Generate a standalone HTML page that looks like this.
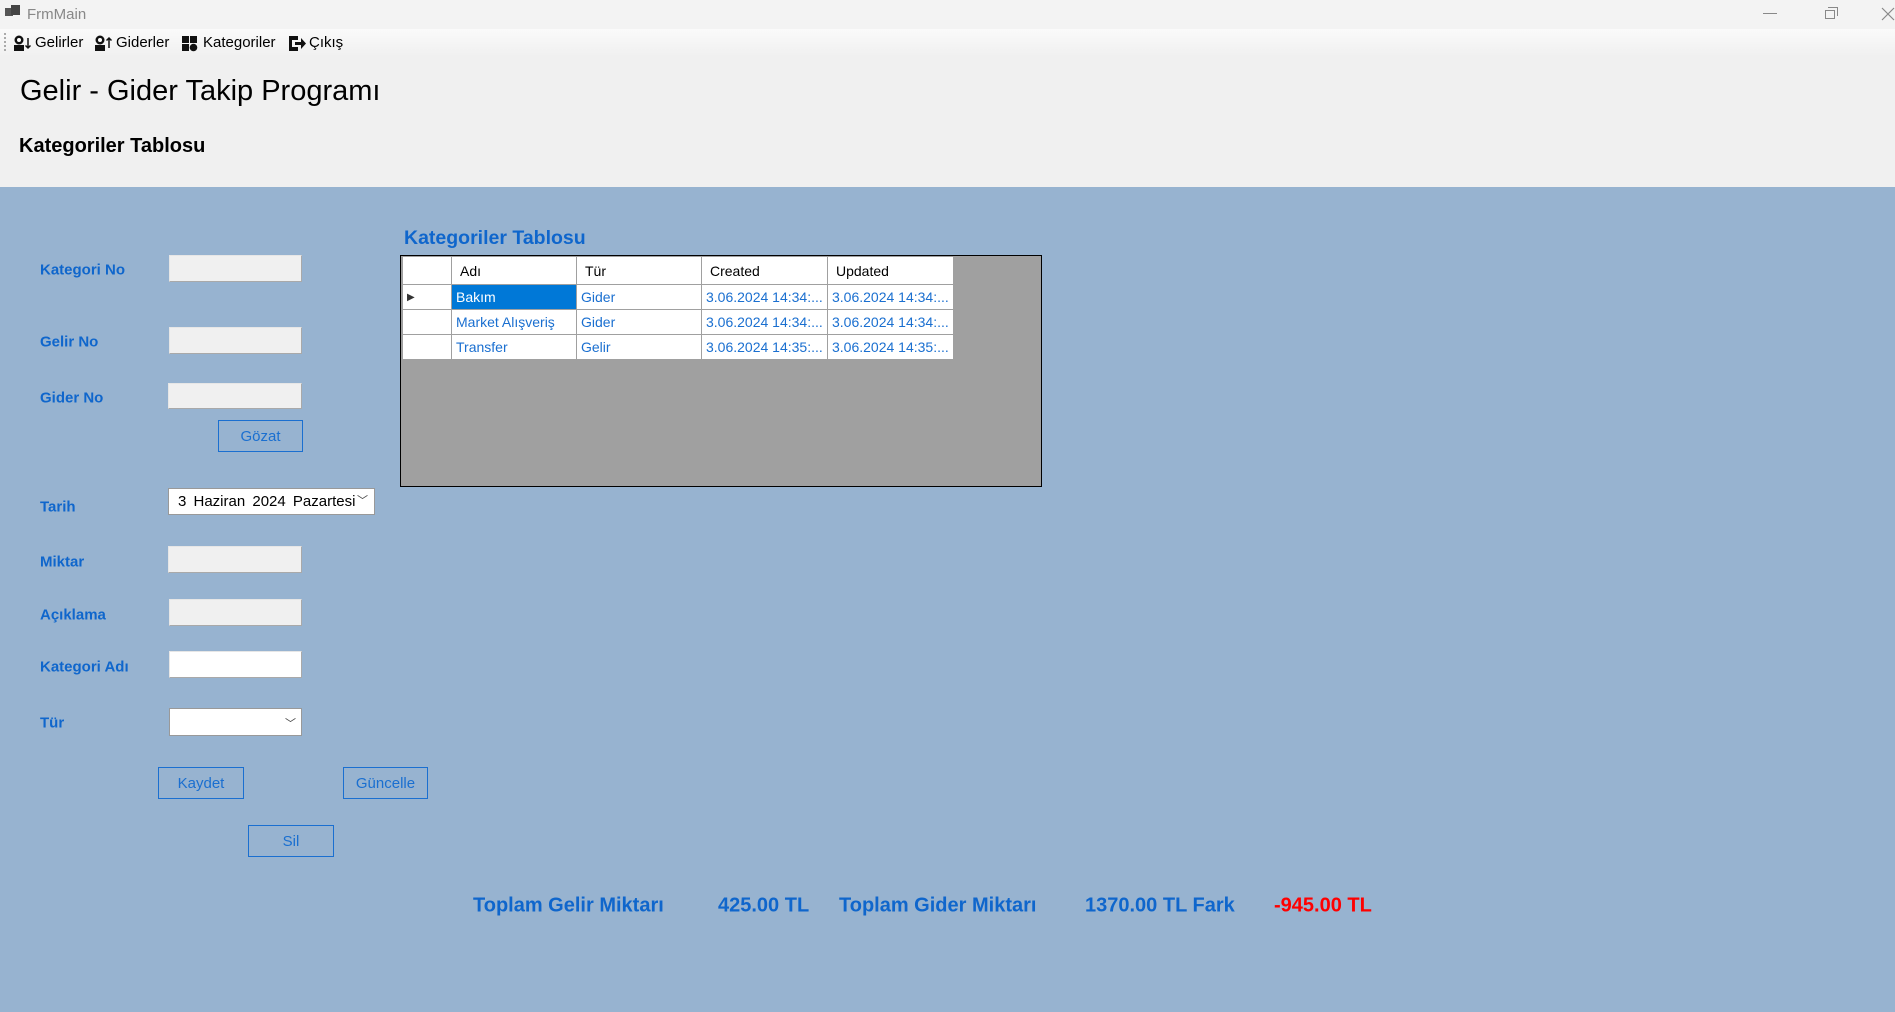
<!DOCTYPE html>
<html><head><meta charset="utf-8"><style>
*{margin:0;padding:0;box-sizing:border-box}
body{width:1895px;height:1012px;position:relative;overflow:hidden;background:#97b3d0;font-family:"Liberation Sans",sans-serif}
.a{position:absolute;white-space:nowrap}
.lbl{position:absolute;left:40px;font-weight:bold;font-size:15px;color:#0f66cc;transform:translateY(-50%);margin-top:2px}
.tb{position:absolute;background:#f0f0f0;border:1px solid #a9a9a9;border-top-color:#e6e6e6;border-left-color:#e6e6e6}
.wb{background:#fff}
.btn{position:absolute;border:1px solid #1a6fd0;color:#1a6fd0;font-size:15px;display:flex;align-items:center;justify-content:center}
.tot{position:absolute;top:906px;transform:translateY(-50%);font-weight:bold;font-size:20px;color:#0f66cc}
table{border-collapse:collapse;position:absolute;left:402px;top:256px;font-size:14px}
td{border:1px solid #a0a0a0;height:25px;padding:0 4px;color:#1a6fd0;white-space:nowrap;background:#fff;overflow:hidden}
tr.h td{height:28px;color:#000;padding-left:8px}
</style></head><body>
<div class="a" style="left:0;top:0;width:1895px;height:29px;background:#f3f3f3"></div>
<div class="a" style="left:5px;top:8px;width:8px;height:8px;background:#555"></div>
<div class="a" style="left:11px;top:5px;width:9px;height:10px;background:#444"></div>
<div class="a" style="left:27px;top:6px;font-size:15px;color:#888">FrmMain</div>
<div class="a" style="left:1763px;top:13px;width:14px;height:1px;background:#888"></div>
<div class="a" style="left:1825px;top:10px;width:10px;height:9px;border:1px solid #888"></div>
<div class="a" style="left:1828px;top:7px;width:10px;height:9px;border-top:1px solid #888;border-right:1px solid #888"></div>
<svg class="a" style="left:1881px;top:7px" width="14" height="14"><path d="M1 1L13 13M13 1L1 13" stroke="#888" stroke-width="1.2"/></svg>
<div class="a" style="left:0;top:29px;width:1895px;height:28px;background:linear-gradient(#fafafa,#f0f0f0)"></div>
<div class="a" style="left:4px;top:33px;width:2px;height:18px;border-left:2px dotted #aaa"></div>
<svg class="a" style="left:13px;top:35px" width="20" height="17" viewBox="0 0 20 17"><circle cx="6" cy="5" r="4.5" fill="#111"/><circle cx="6" cy="5" r="2" fill="#fff"/><rect x="1" y="10" width="10" height="6" fill="#111"/><path d="M15 3v10M12.5 10.5L15 13l2.5-2.5" stroke="#111" stroke-width="1.5" fill="none"/></svg>
<div class="a" style="left:35px;top:34px;font-size:15px">Gelirler</div>
<svg class="a" style="left:94px;top:35px" width="20" height="17" viewBox="0 0 20 17"><circle cx="6" cy="5" r="4.5" fill="#111"/><circle cx="6" cy="5" r="2" fill="#fff"/><rect x="1" y="10" width="10" height="6" fill="#111"/><path d="M15 13V3M12.5 5.5L15 3l2.5 2.5" stroke="#111" stroke-width="1.5" fill="none"/></svg>
<div class="a" style="left:116px;top:34px;font-size:15px">Giderler</div>
<svg class="a" style="left:182px;top:36px" width="16" height="16"><rect x="0" y="0" width="7" height="7" fill="#111"/><rect x="8" y="0" width="7" height="7" fill="#111"/><rect x="0" y="8" width="7" height="7" fill="#111"/><circle cx="11.5" cy="11.5" r="3.8" fill="#111"/></svg>
<div class="a" style="left:203px;top:34px;font-size:15px">Kategoriler</div>
<svg class="a" style="left:288px;top:35px" width="19" height="17"><path d="M1 1h9v4H4v7h6v4H1z" fill="#111"/><path d="M7 7h6V3l5 5.5-5 5.5v-4H7z" fill="#111"/></svg>
<div class="a" style="left:309px;top:34px;font-size:15px">Çıkış</div>
<div class="a" style="left:0;top:57px;width:1895px;height:130px;background:#f0f0f0"></div>
<div class="a" style="left:20px;top:75px;font-size:29px">Gelir - Gider Takip Programı</div>
<div class="a" style="left:19px;top:135px;font-size:20px;font-weight:bold">Kategoriler Tablosu</div>

<div class="lbl" style="top:268px">Kategori No</div>
<div class="lbl" style="top:340px">Gelir No</div>
<div class="lbl" style="top:396px">Gider No</div>
<div class="lbl" style="top:505px">Tarih</div>
<div class="lbl" style="top:560px">Miktar</div>
<div class="lbl" style="top:613px">Açıklama</div>
<div class="lbl" style="top:665px">Kategori Adı</div>
<div class="lbl" style="top:721px">Tür</div>

<div class="tb" style="left:169px;top:255px;width:133px;height:27px"></div>
<div class="tb" style="left:169px;top:327px;width:133px;height:27px"></div>
<div class="tb" style="left:168px;top:383px;width:134px;height:26px"></div>
<div class="btn" style="left:218px;top:420px;width:85px;height:32px">Gözat</div>
<div class="tb wb" style="left:168px;top:488px;width:207px;height:27px;border-color:#999"><span class="a" style="left:9px;top:4px;font-size:15px;word-spacing:3px">3 Haziran 2024 Pazartesi</span><span class="a" style="right:6px;top:3px;font-size:11px;color:#444">﹀</span></div>
<div class="tb" style="left:168px;top:546px;width:134px;height:27px"></div>
<div class="tb" style="left:169px;top:599px;width:133px;height:27px"></div>
<div class="tb wb" style="left:169px;top:651px;width:133px;height:27px"></div>
<div class="tb wb" style="left:169px;top:708px;width:133px;height:28px;border-color:#999"><span class="a" style="right:5px;top:6px;font-size:11px;color:#444">﹀</span></div>
<div class="btn" style="left:158px;top:767px;width:86px;height:32px">Kaydet</div>
<div class="btn" style="left:343px;top:767px;width:85px;height:32px">Güncelle</div>
<div class="btn" style="left:248px;top:825px;width:86px;height:32px">Sil</div>

<div class="a" style="left:404px;top:227px;font-size:19.5px;font-weight:bold;color:#0f66cc">Kategoriler Tablosu</div>
<div class="a" style="left:400px;top:255px;width:642px;height:232px;background:#a0a0a0;border:1px solid #000"></div>
<table>
<colgroup><col style="width:49px"><col style="width:125px"><col style="width:125px"><col style="width:126px"><col style="width:124px"></colgroup>
<tr class="h"><td></td><td>Adı</td><td>Tür</td><td>Created</td><td>Updated</td></tr>
<tr><td style="color:#333;font-size:10px">▶</td><td style="background:#0078d7;color:#fff">Bakım</td><td>Gider</td><td>3.06.2024 14:34:...</td><td>3.06.2024 14:34:...</td></tr>
<tr><td></td><td>Market Alışveriş</td><td>Gider</td><td>3.06.2024 14:34:...</td><td>3.06.2024 14:34:...</td></tr>
<tr><td></td><td>Transfer</td><td>Gelir</td><td>3.06.2024 14:35:...</td><td>3.06.2024 14:35:...</td></tr>
</table>

<div class="tot" style="left:473px">Toplam Gelir Miktarı</div>
<div class="tot" style="left:718px">425.00 TL</div>
<div class="tot" style="left:839px">Toplam Gider Miktarı</div>
<div class="tot" style="left:1085px">1370.00 TL Fark</div>
<div class="tot" style="left:1274px;color:#f00">-945.00 TL</div>
</body></html>
